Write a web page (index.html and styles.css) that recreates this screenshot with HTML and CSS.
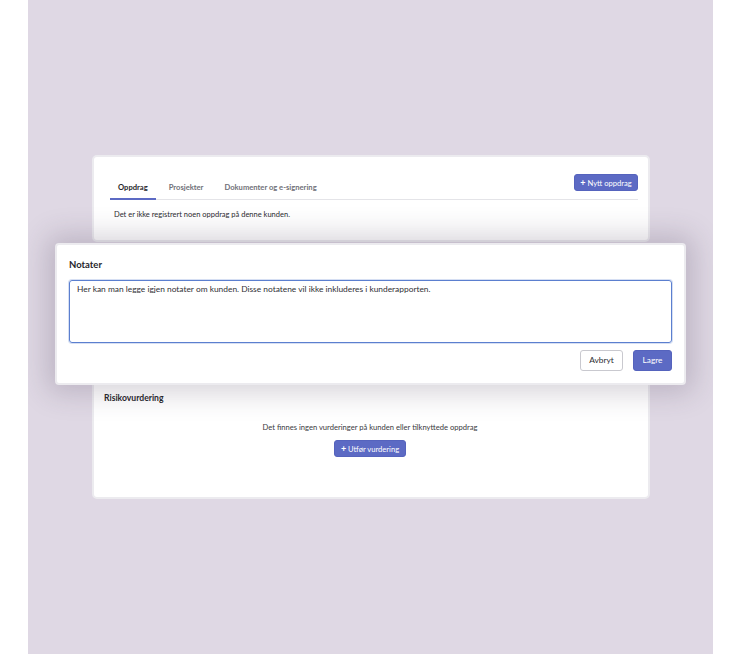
FILE: index.html
```html
<!DOCTYPE html>
<html lang="no">
<head>
<meta charset="utf-8">
<title>Notater</title>
<link rel="stylesheet" href="styles.css">
</head>
<body>
<div class="frame">
  <div class="column">
    <section class="card card-top">
      <div class="tabbar">
        <nav class="tabs">
          <span class="tab active">Oppdrag</span>
          <span class="tab">Prosjekter</span>
          <span class="tab">Dokumenter og e-signering</span>
        </nav>
        <button class="btn primary small"><span class="plus">+</span> Nytt oppdrag</button>
      </div>
      <p class="empty">Det er ikke registrert noen oppdrag på denne kunden.</p>
    </section>

    <section class="card card-risk">
      <h3 class="card-title">Risikovurdering</h3>
      <div class="risk-body">
        <p class="muted">Det finnes ingen vurderinger på kunden eller tilknyttede oppdrag</p>
        <button class="btn primary small"><span class="plus">+</span> Utfør vurdering</button>
      </div>
    </section>
  </div>

  <div class="modal">
    <h2 class="modal-title">Notater</h2>
    <div class="textarea">Her kan man legge igjen notater om kunden. Disse notatene vil ikke inkluderes i kunderapporten.</div>
    <div class="actions">
      <button class="btn secondary">Avbryt</button>
      <button class="btn primary">Lagre</button>
    </div>
  </div>
</div>
</body>
</html>
```

FILE: styles.css
```css
* { box-sizing: border-box; }

html, body {
  margin: 0;
  padding: 0;
  background: #ffffff;
}

body {
  font-family: "Lato", "Liberation Sans", sans-serif;
  color: #2b2b2f;
}

.frame {
  position: relative;
  margin-left: 28px;
  width: 685px;
  height: 654px;
  background: #dfd8e4;
  overflow: hidden;
}

.column {
  display: flex;
  flex-direction: column;
  padding: 155px 0 0 64px;
  width: 622px;
}

.card {
  background: #ffffff;
  border: 2px solid #ecebef;
  border-radius: 5px;
}

.card-top {
  height: 87px;
  padding: 16px 10px 0 16px;
}

.tabbar {
  display: flex;
  justify-content: space-between;
  align-items: flex-start;
  border-bottom: 1px solid #e4e4e8;
}

.tabs {
  display: flex;
  gap: 5px;
}

.tab {
  font-size: 7.6px;
  font-weight: 700;
  color: #707078;
  padding: 10px 8px 7px;
  line-height: 8px;
  border-bottom: 2px solid transparent;
  margin-bottom: -1px;
}

.tab.active {
  color: #26262b;
  border-bottom-color: #5c6ac4;
}

.btn {
  font-family: inherit;
  border-radius: 3px;
  cursor: pointer;
}

.btn.primary {
  background: #5c6ac4;
  color: #ffffff;
  border: 1px solid #5563bd;
}

.btn.small {
  font-size: 7.6px;
  height: 17px;
  padding: 0 6px;
  line-height: 15px;
}

.tabbar .btn.small {
  margin-top: 1px;
  width: 64px;
  padding: 0;
}

.plus {
  font-size: 9px;
  font-weight: 700;
}

.empty {
  margin: 10px 0 0 4px;
  font-size: 7.5px;
  color: #2b2b2f;
  line-height: 10px;
}

.card-risk {
  margin-top: 8px;
  height: 249px;
  padding: 141px 12px 0 10px;
}

.card-title {
  margin: 0;
  font-size: 8.6px;
  font-weight: 700;
  color: #26262b;
  line-height: 10px;
}

.risk-body {
  display: flex;
  flex-direction: column;
  align-items: center;
  margin-top: 19px;
  gap: 8px;
}

.muted {
  margin: 0;
  font-size: 7.6px;
  color: #3a3a40;
  line-height: 10px;
}

.risk-body .btn.small {
  width: 72px;
  padding: 0;
}

.modal {
  position: absolute;
  left: 27px;
  top: 243px;
  width: 631px;
  height: 142px;
  background: #ffffff;
  border: 2px solid #ecebef;
  border-radius: 4px;
  padding: 13px 12px 0 12px;
  box-shadow: 0 0 28px 8px rgba(70, 55, 80, 0.22);
}

.modal-title {
  margin: 0;
  font-size: 9.5px;
  font-weight: 700;
  color: #26262b;
  line-height: 14px;
}

.textarea {
  margin-top: 8px;
  height: 63px;
  border: 1.5px solid #5b7fcf;
  border-radius: 3px;
  padding: 3px 7px;
  font-size: 8.4px;
  line-height: 10px;
  color: #2f2f35;
  box-shadow: 0 0 0 1px rgba(91, 127, 207, 0.25);
}

.actions {
  display: flex;
  justify-content: flex-end;
  gap: 10px;
  margin-top: 7px;
}

.actions .btn {
  height: 21px;
  font-size: 8.3px;
  line-height: 19px;
  padding: 0;
}

.btn.secondary {
  width: 43px;
  background: #ffffff;
  color: #2b2b2f;
  border: 1px solid #c9c9cf;
}

.actions .btn.primary {
  width: 39px;
}
```
